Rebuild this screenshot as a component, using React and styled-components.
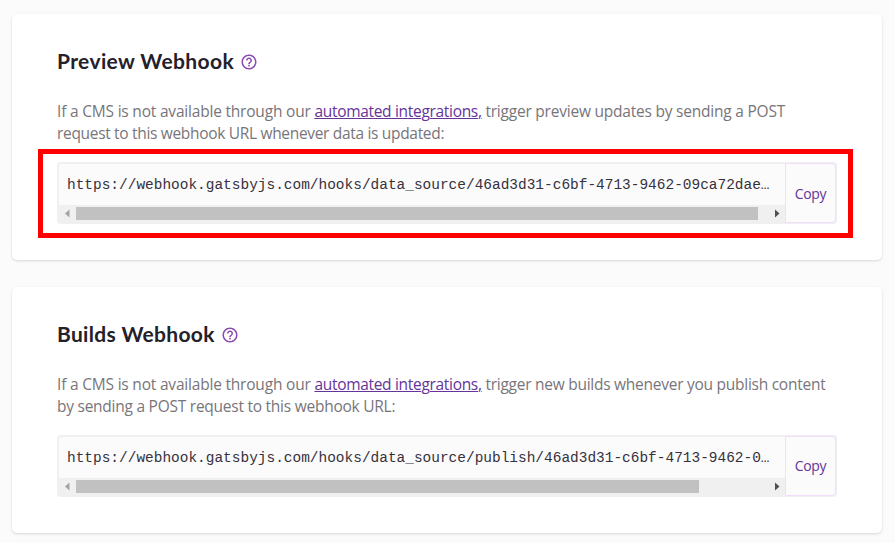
import React from "react";
import styled, { createGlobalStyle } from "styled-components";
import { MdHelpOutline } from "react-icons/md";

const GlobalStyle = createGlobalStyle`
  * { box-sizing: border-box; }
  body {
    margin: 0;
    background: #fbfbfb;
    font-family: "Open Sans", "Noto Sans", sans-serif;
  }
`;

const Page = styled.main`
  width: 895px;
  height: 543px;
  padding: 14px 13px 0 12px;
  display: flex;
  flex-direction: column;
  gap: 27px;
  overflow: hidden;
`;

const Card = styled.section`
  position: relative;
  height: 246px;
  flex: none;
  padding: 34px 45px 0;
  background: #fff;
  border-radius: 5px;
  box-shadow: 0 1px 3px rgba(46, 41, 51, 0.1), 0 1px 2px rgba(71, 63, 79, 0.08);
`;

const Header = styled.div`
  display: flex;
  align-items: center;
  gap: 6px;
  height: 28px;
`;

const Title = styled.h2`
  margin: 0;
  padding-bottom: 2px;
  font: 700 21px/26px Lato, sans-serif;
  letter-spacing: ${(p) => p.$spacing}px;
  color: #232129;
`;

const HelpIcon = styled(MdHelpOutline)`
  width: 18px;
  height: 18px;
  color: #8a4baf;
`;

const Description = styled.p`
  margin: 24px 0 0;
  height: 44px;
  font-size: 15.5px;
  line-height: 22px;
  color: #78757a;
  white-space: nowrap;
`;

const Run = styled.span`
  letter-spacing: ${(p) => p.$spacing}px;
`;

const Link = styled.a`
  color: #663399;
  letter-spacing: ${(p) => p.$spacing}px;
  text-decoration: underline;
  text-decoration-thickness: 1px;
  text-underline-offset: 1px;
`;

const Field = styled.div`
  display: flex;
  width: 780px;
  height: 62px;
  margin-top: 18px;
  background: #f0f0f2;
  border-radius: 4px;
`;

const UrlPane = styled.div`
  width: 728px;
  padding: 2px 0 2px 2px;
`;

const Url = styled.div`
  height: 41px;
  padding-left: 8px;
  background: #fbfbfb;
  border-top-left-radius: 3px;
  font: 14.46px/43px "Liberation Mono", monospace;
  color: #36313d;
  white-space: nowrap;
  overflow: hidden;
`;

const ScrollTrack = styled.div`
  display: flex;
  align-items: center;
  height: 17px;
  background: #f0f0f0;
`;

const Arrow = styled.svg`
  width: 17px;
  height: 17px;
  flex: none;
  fill: ${(p) => p.$color};
`;

const ThumbLane = styled.div`
  flex: 1;
`;

const Thumb = styled.div`
  width: ${(p) => p.$width}px;
  height: 13px;
  background: #c1c1c1;
`;

const CopyButton = styled.button`
  width: 51px;
  height: 60px;
  margin-top: 1px;
  padding: ${(p) => p.$nudge}px 0 0;
  border: 1px solid #f1defa;
  border-radius: 0 4px 4px 0;
  background: #fbfbfb;
  color: #663399;
  font: 14px/20px "Open Sans", sans-serif;
  letter-spacing: -0.3px;
`;

const Highlight = styled.div`
  position: absolute;
  left: 26px;
  top: 135px;
  width: 815px;
  height: 89px;
  border: 5px solid #ff0000;
  pointer-events: none;
`;

function WebhookField({ url, thumb, nudge = 0 }) {
  return (
    <Field>
      <UrlPane>
        <Url>{url}</Url>
        <ScrollTrack>
          <Arrow $color="#a3a3a3" viewBox="0 0 17 17">
            <path d="M10.5 4.5v8L6 8.5z" />
          </Arrow>
          <ThumbLane>
            <Thumb $width={thumb} />
          </ThumbLane>
          <Arrow $color="#505050" viewBox="0 0 17 17">
            <path d="M7 4.5v8l4.5-4z" />
          </Arrow>
        </ScrollTrack>
      </UrlPane>
      <CopyButton $nudge={nudge}>Copy</CopyButton>
    </Field>
  );
}

export default function App() {
  return (
    <>
      <GlobalStyle />
      <Page>
        <Card>
          <Header>
            <Title $spacing={0.38}>Preview Webhook</Title>
            <HelpIcon />
          </Header>
          <Description>
            <Run $spacing={-0.2}>If a CMS is not available through our </Run>
            <Link $spacing={-0.31}>automated integrations,</Link>
            <Run $spacing={-0.22}> trigger preview updates by sending a POST</Run>
            <br />
            <Run $spacing={-0.32}>request to this webhook URL whenever data is updated:</Run>
          </Description>
          <WebhookField
            url="https://webhook.gatsbyjs.com/hooks/data_source/46ad3d31-c6bf-4713-9462-09ca72dae…"
            thumb={682}
            nudge={2}
          />
          <Highlight />
        </Card>
        <Card>
          <Header>
            <Title $spacing={0.32}>Builds Webhook</Title>
            <HelpIcon />
          </Header>
          <Description>
            <Run $spacing={-0.2}>If a CMS is not available through our </Run>
            <Link $spacing={-0.31}>automated integrations,</Link>
            <Run $spacing={-0.26}> trigger new builds whenever you publish content</Run>
            <br />
            <Run $spacing={-0.25}>by sending a POST request to this webhook URL:</Run>
          </Description>
          <WebhookField
            url="https://webhook.gatsbyjs.com/hooks/data_source/publish/46ad3d31-c6bf-4713-9462-0…"
            thumb={623}
          />
        </Card>
      </Page>
    </>
  );
}
